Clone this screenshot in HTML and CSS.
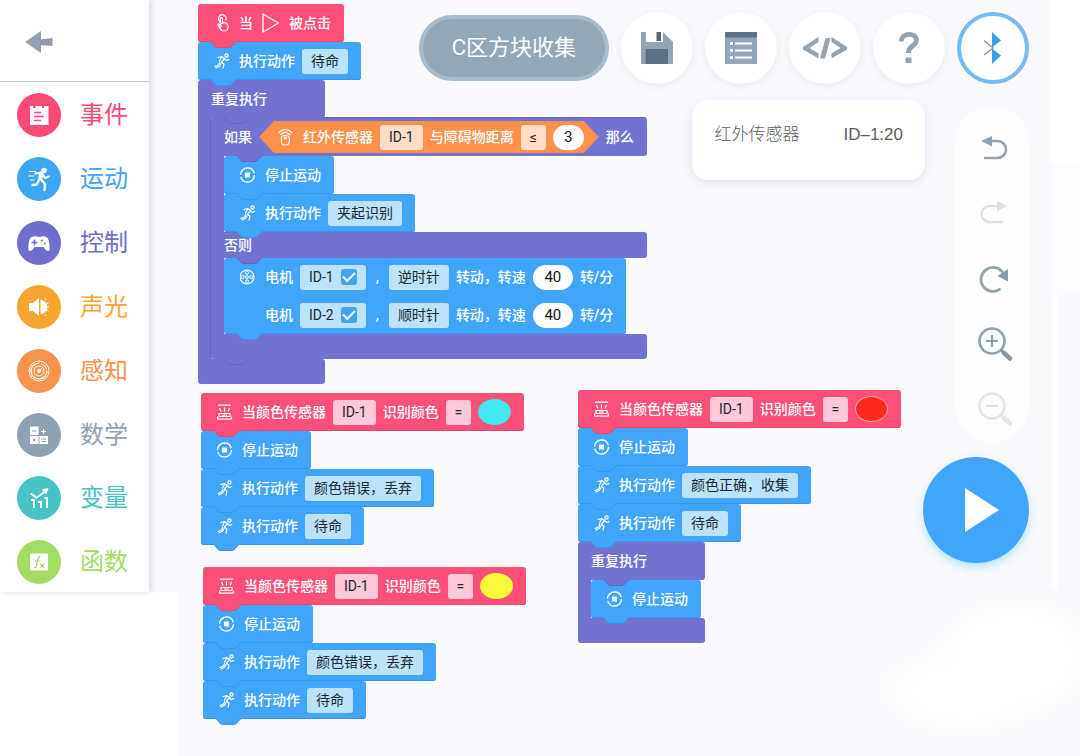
FILE: index.html
```html
<!DOCTYPE html>
<html lang="zh-CN">
<head>
<meta charset="utf-8">
<meta name="viewport" content="width=device-width, initial-scale=1">
<title>C区方块收集</title>
<link rel="stylesheet" href="styles.css">
</head>
<body>
<svg class="sprite" aria-hidden="true">
  <symbol id="i-run" viewBox="1 0 18 18"><g fill="none" stroke="currentColor" stroke-width="1.200" stroke-linecap="round" stroke-linejoin="round"><circle cx="13.500" cy="3.500" r="1.600"/><path d="M5 5.500l3.500-1 3 1.800-3 3.900 2.500 2-1 4M8.800 4.800L6.500 9M11.500 6.300l1.500 2.200 2.800-.8M6.800 10.500L5.500 13 2 14.500M3 16l3.500-1.800L8 11.800"/></g></symbol>
  <symbol id="i-stop" viewBox="2 0 18 18"><circle cx="9.500" cy="9" r="7" fill="none" stroke="currentColor" stroke-width="1.300" stroke-dasharray="20 2"/><rect x="7" y="6.500" width="5" height="5" rx=".6" fill="currentColor"/></symbol>
  <symbol id="i-touch" viewBox="1 0 18 18"><g fill="none" stroke="currentColor" stroke-width="1.200" stroke-linecap="round"><path d="M6.800 7.500A3.800 3.800 0 1 1 12.800 6"/><path d="M9.500 9.500V4.800a1.100 1.100 0 0 0-2.200 0V11"/><circle cx="11" cy="12.800" r="4.200"/><path d="M8 15.500L5 11.500c-.6-1.200.8-1.800 1.600-.9l1.800 1.600"/></g></symbol>
  <symbol id="i-flag" viewBox="0 0 18 22"><path d="M1 2l15.500 9L1 20z" fill="none" stroke="currentColor" stroke-width="1.300" stroke-linejoin="round"/></symbol>
  <symbol id="i-ir" viewBox="0 0 18 18"><g fill="none" stroke="currentColor" stroke-width="1.200" stroke-linecap="round"><path d="M.8 4.500c4-3.800 9-3.800 13 0M2.800 6.500c2.800-2.500 6.200-2.500 9 0"/><rect x="3.300" y="7.500" width="8" height="9.500" rx="3.500"/><circle cx="7.300" cy="10" r="1"/></g></symbol>
  <symbol id="i-color" viewBox="2 0 18 18"><g fill="none" stroke="currentColor" stroke-width="1.200"><path d="M3 2.200h13M4.500 5l1.500 3.500M9.500 4.500v4M14.500 5L13 8.500M4 10.500h11v3H4zM7 12h5M2.500 16.200h14M2.500 13.600v2.600M16.500 13.600v2.600"/></g></symbol>
  <symbol id="i-motor" viewBox="2 0 18 18"><g fill="none" stroke="currentColor"><circle cx="9" cy="9" r="7" stroke-width="1.200"/><circle cx="9" cy="9" r="1.400"/><circle cx="9" cy="4.600" r="1.600"/><circle cx="9" cy="13.400" r="1.600"/><circle cx="4.600" cy="9" r="1.600"/><circle cx="13.400" cy="9" r="1.600"/></g></symbol>
</svg>

<div class="app">
  <aside class="sidebar">
    <header class="sidebar-head">
      <button class="back" type="button" aria-label="返回"><svg width="28" height="24" viewBox="0 0 28 24"><path d="M0 12L16 1v22z" fill="#94a3b1"/><path d="M15 9.500l12.500-1.500v8L15 15z" fill="#8f99b0"/></svg></button>
    </header>
    <nav class="categories" aria-label="积木分类">
      <button class="category pink" type="button"><span class="disc"><svg viewBox="0 0 44 44"><path d="M13 13h3v2h2.500v-2H25v2h2v-2h4.500v19H13z" fill="#fff"/><path d="M17 19.500h7M17 23.500h10M17 27.500h7" stroke="#fb4c78" stroke-width="1.400"/></svg></span>事件</button>
      <button class="category blue" type="button"><span class="disc"><svg viewBox="0 0 44 44"><circle cx="27" cy="13.500" r="2.700" fill="#fff"/><path d="M18.500 16.500l5.500-1 2.500 3 1.500 2.500 4-1.500" fill="none" stroke="#fff" stroke-width="2" stroke-linecap="round" stroke-linejoin="round"/><path d="M22 16l4.500 1-1.500 7-4-1.500z" fill="#fff"/><path d="M24 22.500l4 4.500-.5 6M22 23l-2.500 4.500-4 .5" fill="none" stroke="#fff" stroke-width="2.400" stroke-linecap="round" stroke-linejoin="round"/><path d="M12 14.500h7M11 19h6.500M13 23h4.500" stroke="#fff"/></svg></span>运动</button>
      <button class="category violet" type="button"><span class="disc"><svg viewBox="0 0 44 44"><path d="M15 16c3-1.500 4 0 7 0s4-1.500 7 0c3 0 4 10 3.500 12.500-.5 2.500-3 1.500-4.500-.5-1-1.500-1-2-2.500-2h-7c-1.500 0-1.500.5-2.500 2-1.500 2-4 3-4.500.5C11 26 12 16 15 16z" fill="#fff"/><path d="M17.500 18.500v6M14.500 21.500h6" stroke="#6f6fcb" stroke-width="1.500"/><circle cx="25" cy="19.500" r="1" fill="#6f6fcb"/><circle cx="28" cy="22.500" r="1" fill="#6f6fcb"/></svg></span>控制</button>
      <button class="category amber" type="button"><span class="disc"><svg viewBox="0 0 44 44"><path d="M12 18h4l6-5v18l-6-5h-4z" fill="#fff"/><path d="M23.500 15a7 7 0 0 1 0 14z" fill="#fff"/><path d="M28 14.500l1-1M30 18.500l1.500-.5M30.500 22h1.500M30 25.500l1.500.5M28 29.500l1 1" stroke="#fff" stroke-width="1.200"/></svg></span>声光</button>
      <button class="category orange" type="button"><span class="disc"><svg viewBox="0 0 44 44" fill="none" stroke="#fff"><circle cx="22" cy="22" r="10"/><path d="M22 14a8 8 0 1 0 8 8" stroke-width="1.300"/><path d="M24 14.500a8 8 0 0 1 5.500 6"/><circle cx="22" cy="22" r="5"/><path d="M21.500 22.500l5-5"/><circle cx="22" cy="22" r="1.500" fill="#fff"/></svg></span>感知</button>
      <button class="category slate" type="button"><span class="disc"><svg viewBox="0 0 44 44"><path d="M13 13.500h8.500V22H13zM13 23h8.500v8H13zM22.500 23H31v8h-8.500z" fill="#fff"/><path d="M15 18h4.500M15.500 25.500l3 3M18.500 25.500l-3 3M24.500 26h4.500M24.500 28.500h4.500" stroke="#90a1b2"/><path d="M26.500 16v5M24 18.500h5" stroke="#fff"/></svg></span>数学</button>
      <button class="category teal" type="button"><span class="disc"><svg viewBox="0 0 44 44"><path d="M13.500 17.500l6 4 9-6" fill="none" stroke="#fff" stroke-width="2"/><path d="M24.500 13.500l7-1.500-2 6.500z" fill="#fff"/><path d="M14 24h3v8M21 26h3v6M27.500 22H30v10" fill="none" stroke="#fff" stroke-width="2"/></svg></span>变量</button>
      <button class="category green" type="button"><span class="disc"><svg viewBox="0 0 44 44"><path d="M13 13.500h18v17H13z" fill="#fff"/><path d="M23.500 17c-2-1-2.500 1-3 4l-1 4.500c-.3 2-1 2.500-2.500 2M18 21h4.500M23.500 24l3.500 3.500M27 24l-3.500 3.500" fill="none" stroke="#93cf55" stroke-width="1.100"/></svg></span>函数</button>
    </nav>
  </aside>

  <main class="workspace">
    <div class="canvas">
      <section class="script script-start">
        <div class="block event"><svg class="icon"><use href="#i-touch"/></svg>当<svg class="flag"><use href="#i-flag"/></svg>被点击</div>
        <div class="block motion"><svg class="icon"><use href="#i-run"/></svg>执行动作<button class="field" type="button">待命</button></div>
        <div class="wrap-block">
          <div class="block control head">重复执行</div>
          <div class="mouth">
            <div class="wrap-block branch">
              <div class="block control head">如果
                <div class="condition"><svg class="icon"><use href="#i-ir"/></svg>红外传感器<button class="field" type="button">ID-1</button>与障碍物距离<button class="field operator" type="button">≤</button><input class="number short" type="text" value="3" aria-label="距离"></div>
                那么</div>
              <div class="mouth">
                <div class="block motion"><svg class="icon"><use href="#i-stop"/></svg>停止运动</div>
                <div class="block motion"><svg class="icon"><use href="#i-run"/></svg>执行动作<button class="field" type="button">夹起识别</button></div>
              </div>
              <div class="block control bar">否则</div>
              <div class="mouth">
                <div class="block motion rows">
                  <div class="row"><svg class="icon"><use href="#i-motor"/></svg>电机<label class="field">ID-1<input class="tick" type="checkbox" checked></label><span class="comma">,</span><button class="field" type="button">逆时针</button>转动，转速<input class="number" type="text" value="40" aria-label="ID-1 转速">转/分</div>
                  <div class="row"><span class="icon"></span>电机<label class="field">ID-2<input class="tick" type="checkbox" checked></label><span class="comma">,</span><button class="field" type="button">顺时针</button>转动，转速<input class="number" type="text" value="40" aria-label="ID-2 转速">转/分</div>
                </div>
              </div>
              <div class="block control foot"></div>
            </div>
          </div>
          <div class="block control foot last"></div>
        </div>
      </section>

      <section class="script script-cyan">
        <div class="block event"><svg class="icon"><use href="#i-color"/></svg>当颜色传感器<button class="field" type="button">ID-1</button>识别颜色<button class="field operator" type="button">=</button><button class="swatch cyan" type="button" aria-label="青色"></button></div>
        <div class="block motion"><svg class="icon"><use href="#i-stop"/></svg>停止运动</div>
        <div class="block motion"><svg class="icon"><use href="#i-run"/></svg>执行动作<button class="field" type="button">颜色错误，丢弃</button></div>
        <div class="block motion"><svg class="icon"><use href="#i-run"/></svg>执行动作<button class="field" type="button">待命</button></div>
      </section>

      <section class="script script-yellow">
        <div class="block event"><svg class="icon"><use href="#i-color"/></svg>当颜色传感器<button class="field" type="button">ID-1</button>识别颜色<button class="field operator" type="button">=</button><button class="swatch yellow" type="button" aria-label="黄色"></button></div>
        <div class="block motion"><svg class="icon"><use href="#i-stop"/></svg>停止运动</div>
        <div class="block motion"><svg class="icon"><use href="#i-run"/></svg>执行动作<button class="field" type="button">颜色错误，丢弃</button></div>
        <div class="block motion"><svg class="icon"><use href="#i-run"/></svg>执行动作<button class="field" type="button">待命</button></div>
      </section>

      <section class="script script-red">
        <div class="block event"><svg class="icon"><use href="#i-color"/></svg>当颜色传感器<button class="field" type="button">ID-1</button>识别颜色<button class="field operator" type="button">=</button><button class="swatch red" type="button" aria-label="红色"></button></div>
        <div class="block motion"><svg class="icon"><use href="#i-stop"/></svg>停止运动</div>
        <div class="block motion"><svg class="icon"><use href="#i-run"/></svg>执行动作<button class="field" type="button">颜色正确，收集</button></div>
        <div class="block motion"><svg class="icon"><use href="#i-run"/></svg>执行动作<button class="field" type="button">待命</button></div>
        <div class="wrap-block">
          <div class="block control head">重复执行</div>
          <div class="mouth">
            <div class="block motion"><svg class="icon"><use href="#i-stop"/></svg>停止运动</div>
          </div>
          <div class="block control foot last"></div>
        </div>
      </section>
    </div>

    <div class="toolbar">
      <button class="project" type="button">C区方块收集</button>
      <button class="tool" type="button" aria-label="保存"><svg width="34" height="34" viewBox="0 0 34 34"><path d="M1 1h22l10 10v22H1z" fill="#93a5b4"/><path d="M6 1h17v10H6z" fill="#fff"/><path d="M16.500 1h4.500v9h-4.500z" fill="#5b6674"/><path d="M5.500 18h22.500v15H5.500z" fill="#5e7286"/></svg></button>
      <button class="tool" type="button" aria-label="列表"><svg width="34" height="34" viewBox="0 0 34 34"><path d="M1 1h32v32H1z" fill="#93a5b8"/><path d="M1 1h32v5.500H1z" fill="#5e7286"/><path d="M6 12.500h3M6 19.500h3M6 26.500h3" stroke="#fff" stroke-width="3"/><path d="M11 12.500h17M11 19.500h17M11 26.500h17" stroke="#fff" stroke-width="2"/></svg></button>
      <button class="tool" type="button" aria-label="代码"><svg width="46" height="24" viewBox="0 0 46 24"><path d="M16.500 1v5L7.500 12l9 5.500v5L1 13.500v-2.500zM29.500 1v5l9 6-9 5.500v5L45 13.500v-2.500zM23.500 2h5l-5.500 20.500h-5z" fill="#94a3ae"/></svg></button>
      <button class="tool" type="button" aria-label="帮助"><svg width="22" height="32" viewBox="0 0 22 32"><path d="M3 9.500C4 0 18 .5 18.500 8c.3 5.500-8 6-8 12v1" fill="none" stroke="#94a3ae" stroke-width="4.800"/><path d="M7.500 25.500h6v5.500h-6z" fill="#94a3ae"/></svg></button>
      <button class="tool bluetooth" type="button" aria-label="蓝牙"><svg width="20" height="34" viewBox="0 0 20 34"><path d="M9 1l9 8.500-9 7z" fill="#379ee8"/><path d="M9 17.500l9 7L9 33z" fill="#379ee8"/><path d="M1 9.500l9 7.500-9 7" fill="none" stroke="#6a91ae" stroke-width="1.300"/></svg></button>
    </div>

    <div class="overlay-row">
      <dl class="readout"><dt>红外传感器</dt><dd>ID–1:20</dd></dl>
      <div class="rail">
        <button type="button" aria-label="撤销"><svg width="36" height="36" viewBox="0 0 36 36"><path d="M10 10h10.500a7.800 7.800 0 0 1 0 17H8" fill="none" stroke="#94a4ae" stroke-width="2.600" stroke-linecap="round"/><path d="M4 10L15 5v10.500z" fill="#94a4ae"/></svg></button>
        <button type="button" aria-label="重做" disabled><svg width="36" height="36" viewBox="0 0 36 36"><path d="M22 10h-9.500a7.800 7.800 0 0 0 0 16H25" fill="none" stroke="#dbe1e5" stroke-width="2.400" stroke-linecap="round"/><path d="M30 10l-10-5v10z" fill="#dbe1e5"/></svg></button>
        <button type="button" aria-label="刷新"><svg width="36" height="36" viewBox="0 0 36 36"><path d="M22.500 28.500A12 12 0 1 1 25 10.500" fill="none" stroke="#94a4ae" stroke-width="2.800" stroke-linecap="round"/><path d="M31 8v12.500l-10.500-5.500z" fill="#8b9aaa"/></svg></button>
        <button type="button" aria-label="放大"><svg width="36" height="36" viewBox="0 0 36 36"><circle cx="15" cy="15" r="12.500" fill="none" stroke="#8ba2af" stroke-width="2.600"/><path d="M15 9v12M9 15h12" stroke="#8ba2af" stroke-width="2.200"/><path d="M24 24l3 3" stroke="#8698a8" stroke-width="3"/><path d="M27 27l6 5.500" stroke="#8698a8" stroke-width="4.500" stroke-linecap="round"/></svg></button>
        <button type="button" aria-label="缩小" disabled><svg width="36" height="36" viewBox="0 0 36 36"><circle cx="15" cy="15" r="12.500" fill="none" stroke="#e1e5e8" stroke-width="2.600"/><path d="M9 15h12" stroke="#d7dde0" stroke-width="2.200"/><path d="M24 24l3 3" stroke="#e1e5e8" stroke-width="3"/><path d="M27 27l6 5.500" stroke="#e1e5e8" stroke-width="4.500" stroke-linecap="round"/></svg></button>
      </div>
    </div>
    <button class="play" type="button" aria-label="运行"><svg width="34" height="44" viewBox="0 0 34 44"><path d="M0 0l34 22L0 44z" fill="#fff"/></svg></button>
  </main>
</div>
</body>
</html>
```

FILE: styles.css
```css
:root {
  --event: #fd5078;
  --event-line: #e5476e;
  --motion: #42a5fc;
  --motion-line: #3894e6;
  --control: #7273d0;
  --control-line: #6264bd;
  --sense: #fb914a;
}

* { box-sizing: border-box; }

body {
  margin: 0;
  background: #f9f9fe;
  font-family: Roboto, "Noto Sans CJK SC", sans-serif;
}

button, input { font: inherit; color: inherit; }
button { border: 0; padding: 0; background: none; cursor: pointer; }
svg { display: block; }
.sprite { position: absolute; width: 0; height: 0; }

.app {
  display: grid;
  grid-template-columns: 149px minmax(0, 1fr);
  min-height: 100vh;
  background:
    linear-gradient(#fff, #fff) left bottom / 178px 164px no-repeat,
    radial-gradient(closest-side, #fff 60%, transparent) right -30px bottom 30px / 190px 140px no-repeat,
    radial-gradient(closest-side, #fff 50%, transparent) right 10px bottom 10px / 210px 110px no-repeat,
    linear-gradient(#fff, #fff) right 0 top 0 / 30px 163px no-repeat,
    linear-gradient(#fdfdff, #fdfdff) right 0 top 163px / 28px 130px no-repeat,
    linear-gradient(#fff, #fff) right 22px top 290px / 6px 300px no-repeat,
    #f9f9fe;
}

/* Sidebar */
.sidebar {
  align-self: start;
  padding-bottom: 8px;
  background: #fff;
  box-shadow: 2px 0 5px rgba(90, 90, 110, .2);
}
.sidebar-head {
  display: flex;
  height: 82px;
  padding: 2px 0 0 25px;
  border-bottom: 1px solid #ccc;
}
.categories {
  display: flex;
  flex-direction: column;
  justify-content: space-between;
  height: 65vh;
  margin-top: 11px;
}
.category {
  display: flex;
  align-items: center;
  gap: 19px;
  padding-left: 17px;
  font-size: 24px;
  line-height: 32px;
}
.disc {
  width: 44px;
  height: 44px;
  border-radius: 50%;
  background: currentColor;
}
.pink { color: #f94a76; }
.blue { color: #3ea4f5; }
.violet { color: #6f6fcb; }
.amber { color: #f8a530; }
.orange { color: #f8924c; }
.slate { color: #90a1b2; }
.teal { color: #47c2c5; }
.green { color: #a3dc62; }

/* Workspace */
.workspace {
  position: relative;
  display: flex;
  flex-direction: column;
  align-items: flex-end;
  padding: 12px 51px 0 0;
}
.canvas { position: absolute; inset: 0; overflow: hidden; }
.script {
  position: absolute;
  display: flex;
  flex-direction: column;
  align-items: flex-start;
  font-size: 14px;
  line-height: 20px;
  font-weight: 500;
  color: #fff;
  white-space: nowrap;
}
.script-start { left: 49px; top: 4px; }
.script-cyan { left: 52px; top: 393px; }
.script-yellow { left: 54px; top: 567px; }
.script-red { left: 429px; top: 390px; }

.block {
  position: relative;
  display: flex;
  align-items: center;
  gap: 7px;
  height: 38px;
  padding: 0 13px 0 16px;
  border-radius: 3px;
  background: var(--fill);
  box-shadow: inset 0 -1px 0 var(--line);
}
.event { --fill: var(--event); --line: var(--event-line); }
.motion { --fill: var(--motion); --line: var(--motion-line); }
.control { --fill: var(--control); --line: var(--control-line); padding-left: 13px; }
.block.control { box-shadow: none; }

/* Connector tab under each block */
.block::before, .block::after {
  content: "";
  position: absolute;
  z-index: 1;
  left: 12px;
  bottom: -6px;
  width: 27px;
  height: 7px;
  background: var(--line);
  clip-path: polygon(0 0, 100% 0, 78% 90%, 70% 100%, 28% 100%, 20% 90%);
}
.block::after { bottom: -5px; background: var(--fill); }
.last::before, .last::after { display: none; }
.head::before, .head::after, .bar::before, .bar::after { left: 25px; }

.rows { flex-direction: column; gap: 0; height: auto; }
.row { display: flex; align-items: center; gap: 7px; height: 38px; }

.wrap-block { display: flex; flex-direction: column; align-items: flex-start; }
.wrap-block > .head { min-width: 127px; border-radius: 3px 3px 3px 0; }
.mouth {
  display: flex;
  flex-direction: column;
  align-items: flex-start;
  border-left: 13px solid var(--control);
}
.foot { width: 127px; height: 25px; border-radius: 0 3px 3px 3px; }
.branch {
  align-items: stretch;
  border-radius: 3px;
  box-shadow: -1px 0 0 var(--control-line), 0 -1px 0 var(--control-line);
}
.branch > .foot { width: auto; }
.branch > .foot::before, .branch > .foot::after { left: 12px; }
.bar { height: 26px; border-radius: 0 3px 3px 0; }

.icon { flex: none; width: 18px; height: 18px; }
.flag { width: 18px; height: 22px; margin: 0 2px; }

.field {
  display: flex;
  align-items: center;
  justify-content: center;
  gap: 7px;
  height: 25px;
  padding: 0 9px;
  border-radius: 3px;
  color: #1b2733;
  font-weight: 400;
}
.motion .field { background: #bbe3fb; }
.event .field { background: #fdc9d8; }
.condition .field { background: #fddcc8; }
.field.operator { width: 25px; padding: 0; }
.number {
  width: 40px;
  height: 25px;
  padding: 0;
  border: 0;
  border-radius: 13px;
  background: #fff;
  color: #111;
  font-size: 15px;
  font-weight: 400;
  text-align: center;
}
.number.short { width: 31px; }
.comma { padding: 0 3px; }

.tick {
  appearance: none;
  width: 16px;
  height: 16px;
  margin: 0;
  border-radius: 3px;
  background: #46a4ee;
  display: grid;
  place-items: center;
}
.tick:checked::before {
  content: "";
  width: 10px;
  height: 5px;
  margin-bottom: 3px;
  border: solid #e4f5ff;
  border-width: 0 0 2px 2px;
  transform: rotate(-45deg);
}

.condition {
  display: flex;
  align-items: center;
  gap: 7px;
  height: 32px;
  padding: 0 15px 0 19px;
  background: var(--sense);
  clip-path: polygon(0 50%, 15px 0, calc(100% - 15px) 0, 100% 50%, calc(100% - 15px) 100%, 15px 100%);
}

.swatch { width: 33px; height: 26px; border-radius: 50%; }
.swatch.cyan { background: #41eaf2; }
.swatch.yellow { background: #f8fb39; }
.swatch.red { background: #fc2a1c; border: 1px solid #fda0a0; }

/* Floating controls */
.toolbar { position: relative; display: flex; align-items: center; gap: 12px; }
.project {
  height: 66px;
  padding: 0 29px;
  border: 4px solid #a8bdcc;
  border-radius: 33px;
  background: #94a7b7;
  color: #fff;
  font-size: 22px;
  line-height: 32px;
}
.tool {
  display: grid;
  place-items: center;
  width: 72px;
  height: 72px;
  border-radius: 50%;
  background: #fff;
  box-shadow: 0 2px 6px rgba(90, 90, 130, .1);
}
.bluetooth { border: 4px solid #74bcee; box-shadow: none; }

.overlay-row {
  position: relative;
  display: flex;
  align-items: flex-start;
  gap: 30px;
  padding-top: 16px;
}
.readout {
  display: flex;
  justify-content: space-between;
  gap: 44px;
  margin: 0;
  padding: 22px 22px 32px;
  border-radius: 16px;
  background: #fff;
  box-shadow: 0 3px 8px rgba(90, 90, 130, .14);
  color: #5c5c5c;
  font-family: "Liberation Sans", "Noto Sans CJK SC", sans-serif;
  font-size: 17px;
  font-weight: 300;
  line-height: 26px;
}
.readout dt, .readout dd { margin: 0; }
.rail {
  display: flex;
  flex-direction: column;
  align-items: center;
  gap: 29px;
  margin-top: 6px;
  padding: 25px 0 16px 6px;
  width: 74px;
  border-radius: 37px;
  background: #fefeff;
}
.play {
  position: relative;
  display: grid;
  place-items: center;
  width: 106px;
  height: 106px;
  margin-top: 14px;
  padding-left: 12px;
  border-radius: 50%;
  background: #42a5fc;
  box-shadow: 0 4px 8px rgba(66, 200, 252, .4);
}
```
